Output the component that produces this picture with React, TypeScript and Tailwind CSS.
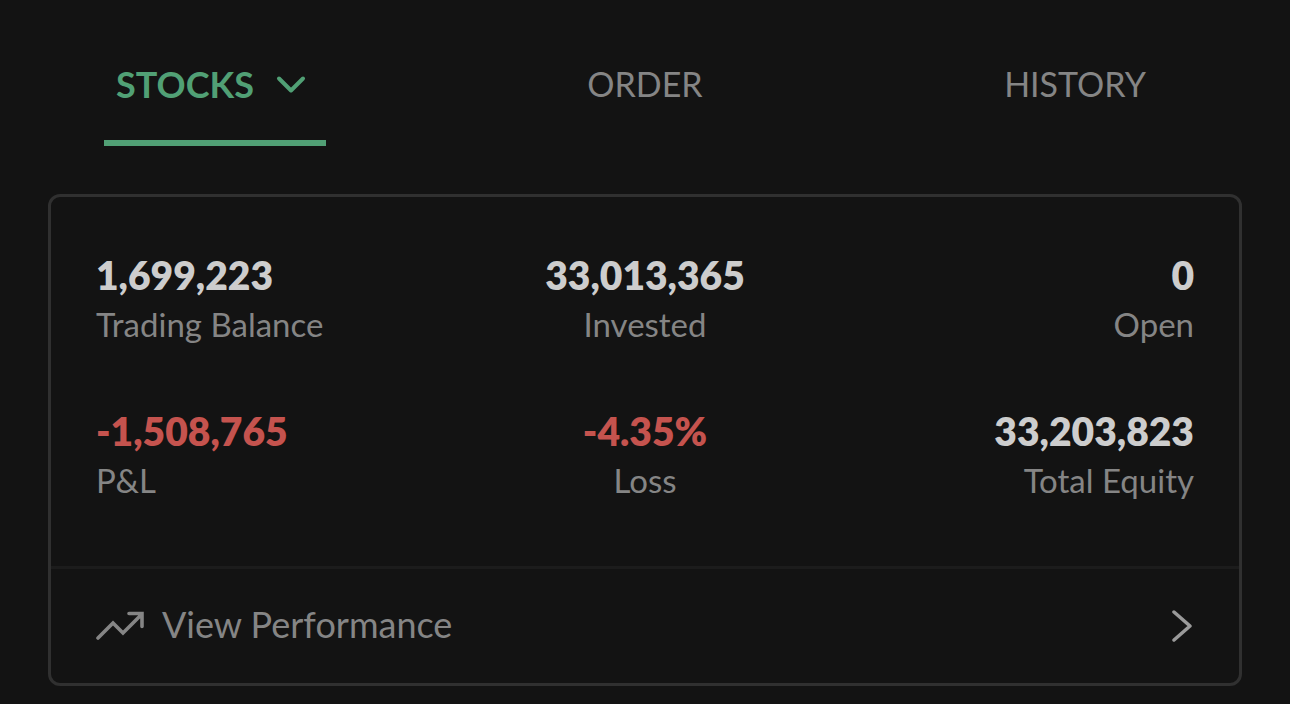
import clsx from "clsx";

interface Stat {
  label: string;
  value: string;
  negative?: boolean;
}

const stats: Stat[] = [
  { label: "Trading Balance", value: "1,699,223" },
  { label: "Invested", value: "33,013,365" },
  { label: "Open", value: "0" },
  { label: "P&L", value: "-1,508,765", negative: true },
  { label: "Loss", value: "-4.35%", negative: true },
  { label: "Total Equity", value: "33,203,823" },
];

function Tabs() {
  const idle =
    "cursor-pointer border-b-[6px] border-transparent px-3 pt-16 pb-9 text-[34px] leading-10 text-[#858585]";

  return (
    <nav className="grid grid-cols-3 justify-items-center">
      <button
        aria-haspopup="menu"
        className="flex cursor-pointer items-center gap-[22px] border-b-[6px] border-[#51a075] pt-16 pr-5 pb-9 pl-3 text-[36px] leading-10 font-bold text-[#51a075]"
      >
        STOCKS
        <svg className="h-5 w-[30px]" viewBox="0 0 30 20" fill="none" aria-hidden="true">
          <path
            d="M3 4.5 15 16.5 27 4.5"
            stroke="currentColor"
            strokeWidth="4"
            strokeLinecap="round"
            strokeLinejoin="round"
          />
        </svg>
      </button>
      <button className={idle}>ORDER</button>
      <button className={idle}>HISTORY</button>
    </nav>
  );
}

function StatItem({ stat }: { stat: Stat }) {
  return (
    <div className="flex flex-col-reverse">
      <dt className="text-[33px] leading-[50px] text-[#858585]">{stat.label}</dt>
      <dd
        className={clsx(
          "text-[39px] leading-12 font-extrabold",
          stat.negative ? "text-[#c5534e]" : "text-[#cdcdcd]"
        )}
      >
        {stat.value}
      </dd>
    </div>
  );
}

export default function App() {
  return (
    <div className="min-h-screen bg-[#131313] pb-4 font-['Lato',sans-serif]">
      <Tabs />

      <main className="mx-12 mt-12 rounded-xl border-[3px] border-[#303030]">
        <dl className="grid grid-cols-[1fr_auto_1fr] gap-y-[58px] px-[45px] pt-[54px] pb-[61px] [&>*:nth-child(3n)]:text-right [&>*:nth-child(3n+2)]:text-center">
          {stats.map((stat) => (
            <StatItem key={stat.label} stat={stat} />
          ))}
        </dl>

        <a
          href="#performance"
          className="flex items-center gap-[18px] border-t-[3px] border-[#1c1c1c] px-[45px] py-8 text-[36px] text-[#858585]"
        >
          <svg className="h-[30px] w-12" viewBox="0 0 48 30" fill="none" aria-hidden="true">
            <path
              d="M2 27 17 12 27 22 45 4M33 2.5h13v13"
              stroke="currentColor"
              strokeWidth="3.6"
              strokeLinecap="round"
            />
          </svg>
          <span className="pb-1 leading-[46px]">View Performance</span>
          <svg className="ml-auto h-8 w-[22px]" viewBox="0 0 22 32" fill="none" aria-hidden="true">
            <path
              d="M2 2 18 16 2 30"
              stroke="#9a9a9a"
              strokeWidth="3.5"
              strokeLinecap="round"
              strokeLinejoin="round"
            />
          </svg>
        </a>
      </main>
    </div>
  );
}
